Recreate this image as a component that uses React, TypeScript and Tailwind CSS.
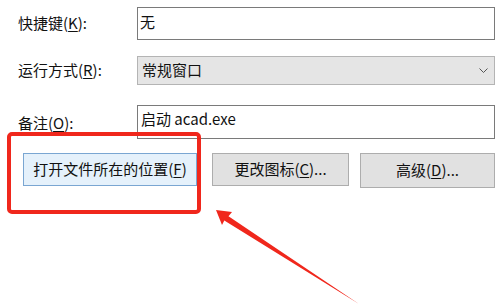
import React from "react";

const font = { fontFamily: '"Microsoft YaHei", "Noto Sans CJK SC", "Noto Sans", sans-serif' };

function U({ c }: { c: string }) {
  return <span className="underline underline-offset-2">{c}</span>;
}

export default function App() {
  return (
    <div className="relative w-[500px] h-[308px] bg-white overflow-hidden text-[15px] text-[#111]" style={font}>
      <div className="flex flex-col pt-[7px]">
        <div className="grid grid-cols-[137px_358px] h-[33px]">
          <div className="pl-[18px] flex items-center">快捷键(<U c="K" />):</div>
          <div className="border border-[#7a7a7a] px-[2px] leading-[27px]">无</div>
        </div>
        <div className="grid grid-cols-[137px_358px] h-[29px] mt-[16px]">
          <div className="pl-[18px] flex items-center">运行方式(<U c="R" />):</div>
          <div className="border border-[#b4b4b4] bg-[#e5e5e5] flex items-center justify-between pl-[4px] pr-[6px]">
            <span>常规窗口</span>
            <svg width="9" height="5" viewBox="0 0 9 5" fill="none" stroke="#555" strokeWidth="1">
              <path d="M0.5 0.5 L4.5 4.5 L8.5 0.5" />
            </svg>
          </div>
        </div>
        <div className="grid grid-cols-[137px_358px] h-[34px] mt-[20px]">
          <div className="pl-[18px] pt-[2px] flex items-center">备注(<U c="O" />):</div>
          <div className="border border-[#7a7a7a] px-[3px] leading-[26px]">启动 acad.exe</div>
        </div>
        <div className="flex items-start mt-[14px] pl-[23px]">
          <div className="w-[174px] h-[33px] bg-[#e5f1fb] border border-[#7aa6d2] flex items-center justify-center">
            打开文件所在的位置(<U c="F" />)
          </div>
          <div className="w-[137px] h-[33px] ml-[15px] bg-[#e1e1e1] border border-[#adadad] flex items-center justify-center">
            更改图标(<U c="C" />)...
          </div>
          <div className="w-[135px] h-[35px] ml-[11px] bg-[#e1e1e1] border border-[#adadad] flex items-center justify-center">
            高级(<U c="D" />)...
          </div>
        </div>
      </div>
      <div className="absolute left-[7px] top-[132px] w-[194px] h-[82px] border-[4px] border-[#f0271c] rounded-[5px]" />
      <svg className="absolute left-0 top-0" width="500" height="308" viewBox="0 0 500 308">
        <polygon
          points="216,210 232,212 228.5,216.2 359,304 224.3,220.6 222,225"
          fill="#f0271c"
        />
      </svg>
    </div>
  );
}
